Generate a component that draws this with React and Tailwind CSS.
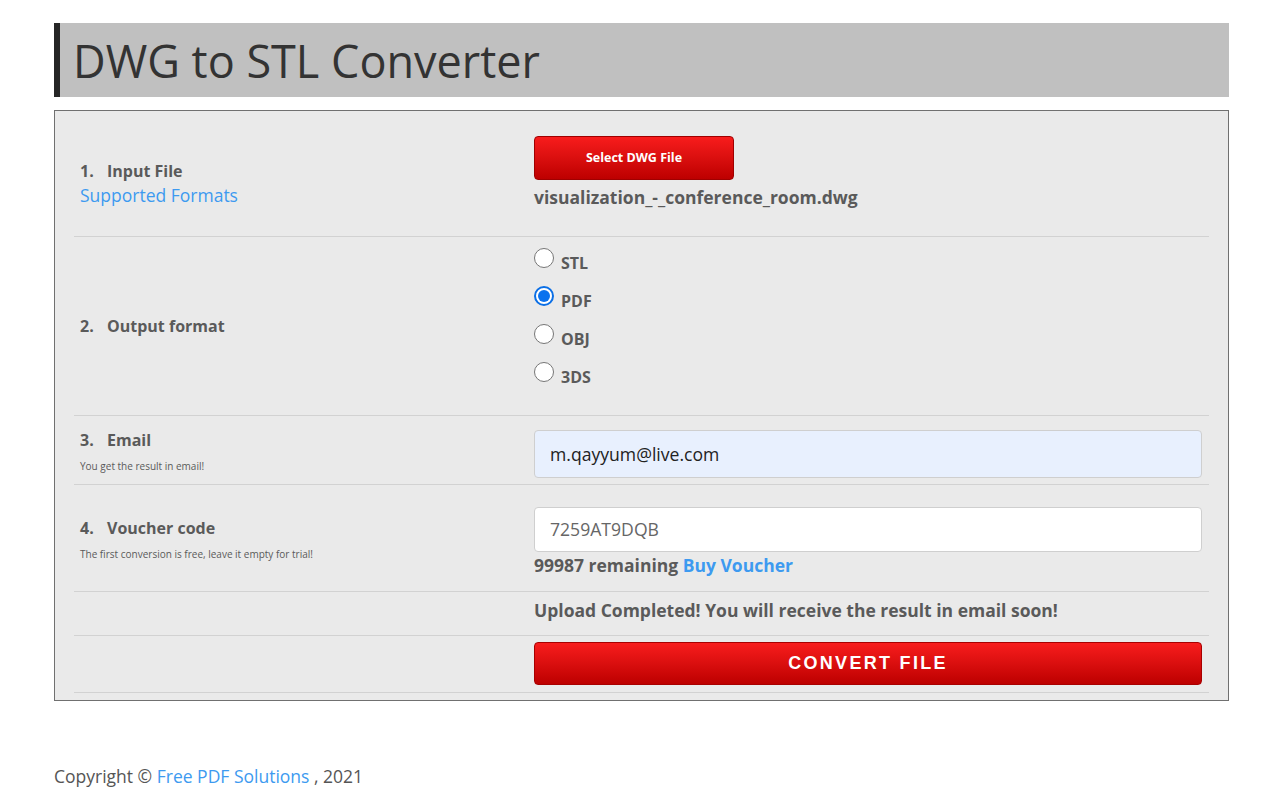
import React from "react";

function Radio({ label, checked }) {
  return (
    <div className="flex h-[38px] items-start">
      {checked ? (
        <div className="mt-0 flex h-[20px] w-[20px] items-center justify-center rounded-full border-2 border-[#0b6fe6] bg-white">
          <div className="h-[12px] w-[12px] rounded-full bg-[#0b72ee]" />
        </div>
      ) : (
        <div className="h-[20px] w-[20px] rounded-full border border-[#767676] bg-white" />
      )}
      <span className="ml-[7px] mt-[4px] text-[16px] font-bold leading-[22px] text-[#5a5a5a]">{label}</span>
    </div>
  );
}

function Label({ num, title, children }) {
  return (
    <div className="flex w-[460px] shrink-0 flex-col justify-center pl-[6px]">
      <div className="flex text-[16px] font-bold leading-[22px] text-[#5a5a5a]">
        <span className="w-[27px]">{num}</span>
        <span>{title}</span>
      </div>
      {children}
    </div>
  );
}

export default function App() {
  return (
    <div className="min-h-[800px] bg-white pt-[23px] font-['Open_Sans',sans-serif] text-[#5a5a5a]">
      <div className="ml-[54px] w-[1175px]">
        <div className="flex h-[74px] items-center border-l-[6px] border-[#262626] bg-[#c0c0c0] pl-[13px]">
          <h1 className="text-[45px] font-normal leading-none text-[#333333]">DWG to STL Converter</h1>
        </div>

        <div className="mt-[13px] border border-[#707070] bg-[#eaeaea] px-[19px] pb-[7px] pt-[19px]">
          {/* Row 1 */}
          <div className="flex">
            <Label num="1." title="Input File">
              <a className="mt-[1px] text-[17.5px] leading-[24px] text-[#3d9af0]">Supported Formats</a>
            </Label>
            <div className="flex flex-col pb-[25px] pt-[6px]">
              <button className="h-[44px] w-[200px] rounded-[4px] border border-[#a00000] bg-gradient-to-b from-[#f81c1c] to-[#bd0000] text-[12.5px] font-bold text-white">
                Select DWG File
              </button>
              <div className="mt-[4px] text-[17.5px] font-bold leading-[27px] text-[#5a5a5a]">
                visualization_-_conference_room.dwg
              </div>
            </div>
          </div>

          {/* Row 2 */}
          <div className="flex border-t border-[#d2d2d2]">
            <Label num="2." title="Output format" />
            <div className="flex flex-col pb-[15px] pt-[11px]">
              <Radio label="STL" />
              <Radio label="PDF" checked />
              <Radio label="OBJ" />
              <Radio label="3DS" />
            </div>
          </div>

          {/* Row 3 */}
          <div className="flex border-t border-[#d2d2d2]">
            <Label num="3." title="Email">
              <div className="mt-[9px] text-[10px] leading-[12px] text-[#5a5a5a]">You get the result in email!</div>
            </Label>
            <div className="flex flex-1 flex-col pb-[6px] pr-[7px] pt-[14px]">
              <div className="flex h-[48px] items-center rounded-[4px] border border-[#cfcfcf] bg-[#e8f0fe] px-[15px] text-[17.6px] text-[#222]">
                m.qayyum@live.com
              </div>
            </div>
          </div>

          {/* Row 4 */}
          <div className="flex border-t border-[#d2d2d2]">
            <Label num="4." title="Voucher code">
              <div className="mt-[9px] text-[10px] leading-[12px] text-[#5a5a5a]">
                The first conversion is free, leave it empty for trial!
              </div>
            </Label>
            <div className="flex flex-1 flex-col pb-[13px] pr-[7px] pt-[22px]">
              <div className="flex h-[45px] items-center rounded-[4px] border border-[#cfcfcf] bg-white px-[15px] text-[17.6px] text-[#666]">
                7259AT9DQB
              </div>
              <div className="mt-[1px] text-[17.5px] font-bold leading-[25px] text-[#5a5a5a]">
                99987 remaining <a className="text-[#3d9af0]">Buy Voucher</a>
              </div>
            </div>
          </div>

          {/* Row 5 */}
          <div className="flex border-t border-[#d2d2d2]">
            <div className="w-[460px] shrink-0" />
            <div className="pb-[11px] pt-[4px] text-[17.5px] font-bold leading-[28px] text-[#5a5a5a]">
              Upload Completed! You will receive the result in email soon!
            </div>
          </div>

          {/* Row 6 */}
          <div className="flex border-b border-t border-[#d2d2d2]">
            <div className="w-[460px] shrink-0" />
            <div className="flex flex-1 flex-col pb-[7px] pr-[7px] pt-[6px]">
              <button className="h-[43px] w-full rounded-[4px] border border-[#a80000] bg-gradient-to-b from-[#f81c1c] to-[#bd0000] font-['Liberation_Sans',Arial,sans-serif] text-[18px] font-bold tracking-[2.3px] text-white">
                CONVERT FILE
              </button>
            </div>
          </div>
        </div>

        <div className="mt-[63px] text-[17.5px] leading-[24px] text-[#555]">
          Copyright © <a className="text-[#3d9af0]">Free PDF Solutions</a> , 2021
        </div>
      </div>
    </div>
  );
}
